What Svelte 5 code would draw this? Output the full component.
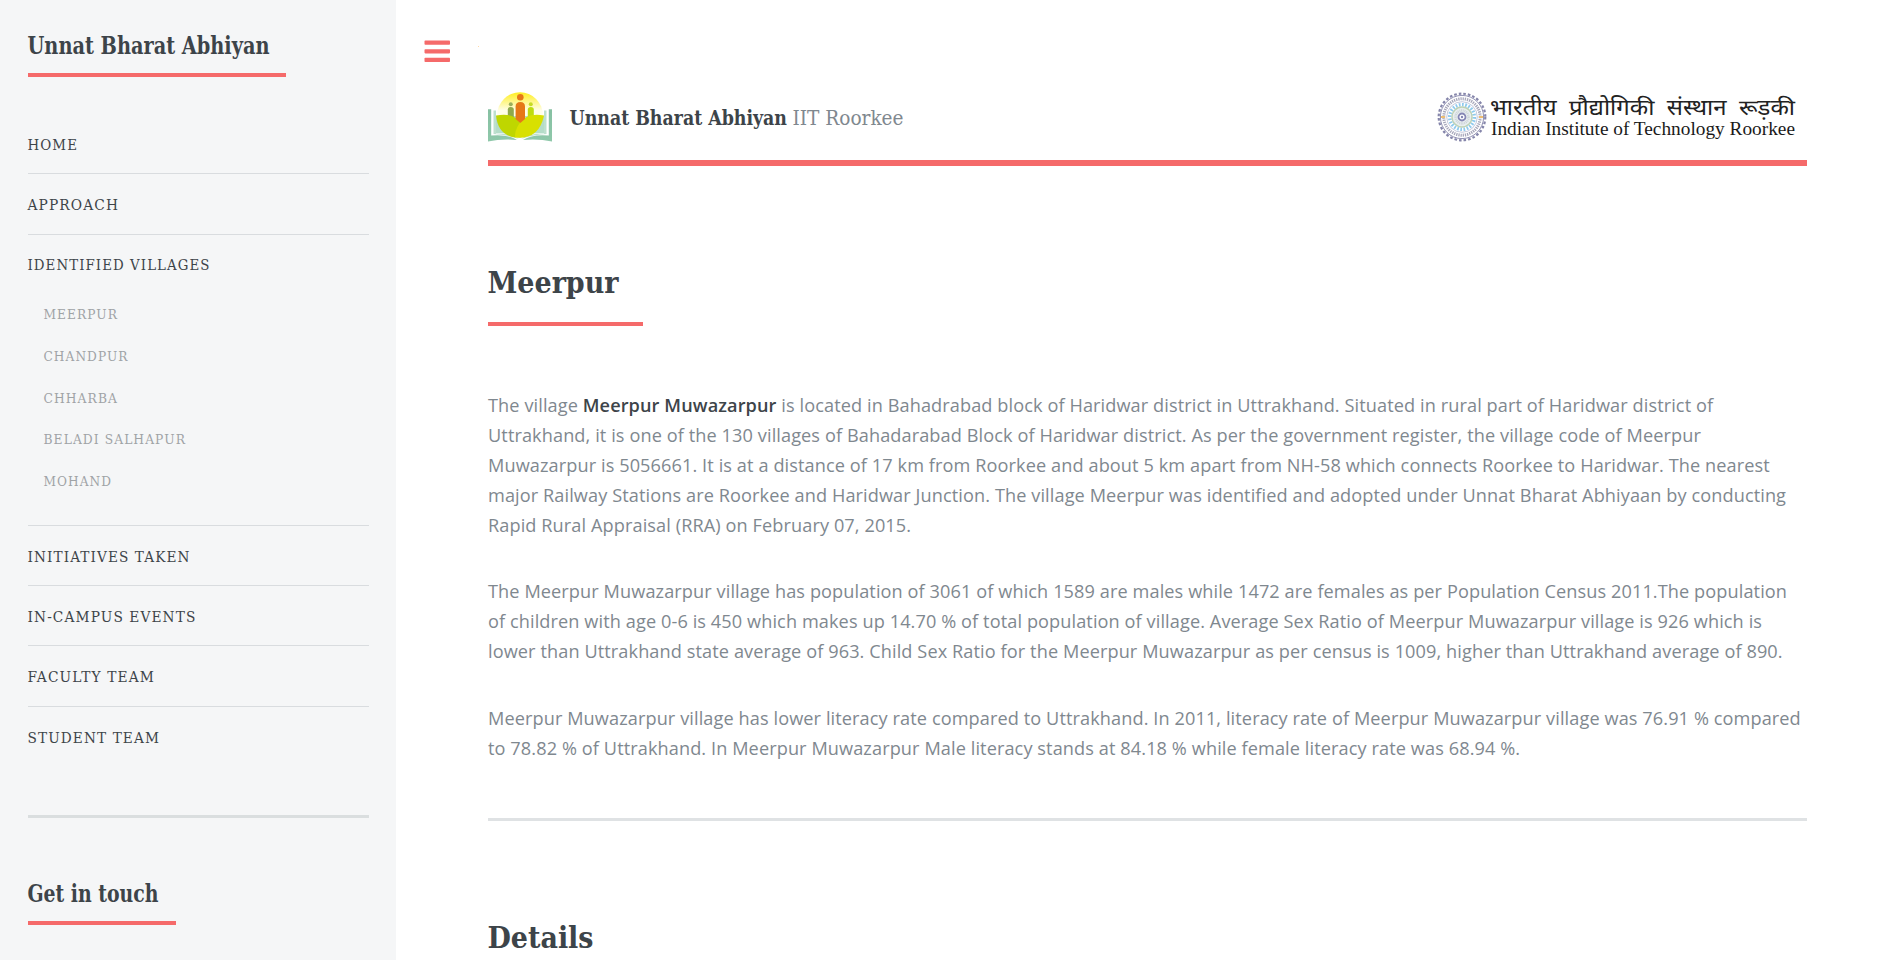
<script>
  const villages = [
    { label: 'Meerpur', w: 74.5, h: 42 },
    { label: 'Chandpur', w: 85, h: 42 },
    { label: 'Chharba', w: 74.5, h: 41 },
    { label: 'Beladi Salhapur', w: 142.5, h: 42 },
    { label: 'Mohand', w: 68.5, h: 42 }
  ];
  const menu = [
    { label: 'Home', w: 50.5, h: 59, base: 36, first: true },
    { label: 'Approach', w: 91.5, h: 61, base: 36 },
    { label: 'Identified Villages', w: 183, h: 291, base: 35, children: villages },
    { label: 'Initiatives Taken', w: 163, h: 60, base: 36 },
    { label: 'In-Campus Events', w: 169, h: 60, base: 36 },
    { label: 'Faculty Team', w: 127.5, h: 61, base: 36 },
    { label: 'Student Team', w: 132.5, h: 60, base: 36 }
  ];
</script>

{#snippet slab(text, w, h, base, size, cls)}
  <svg class="slab {cls}" width={w} height={h}>
    <text x="-0.5" y={base} font-size={size} textLength={w} lengthAdjust="spacingAndGlyphs">{text}</text>
  </svg>
{/snippet}

<div class="page">
  <aside>
    <h2 class="bar" style:width="258px">{@render slab('Unnat Bharat Abhiyan', 242, 45, 26, 23.5, 'bold')}</h2>
    <nav>
      {#each menu as item}
        <div class="item" class:first={item.first} style:height="{item.h}px">
          {@render slab(item.label.toUpperCase(), item.w, 60, item.base, 15.2, 'link')}
          {#if item.children}
            <div class="sub">
              {#each item.children as v}
                <div style:height="{v.h}px">{@render slab(v.label.toUpperCase(), v.w, 40, 24, 12.8, 'muted')}</div>
              {/each}
            </div>
          {/if}
        </div>
      {/each}
    </nav>
    <hr class="side-rule" />
    <h2 class="bar touch" style:width="148px">{@render slab('Get in touch', 131, 45, 26, 23.5, 'bold')}</h2>
  </aside>

  <div class="toggle">
    <svg width="26" height="22" fill="#f56a6a">
      <rect x="0.5" y="0.6" width="25.5" height="4.2" rx="0.8" /><rect x="0.5" y="9.2" width="25.5" height="4.2" rx="0.8" /><rect x="0.5" y="17.8" width="25.5" height="4.2" rx="0.8" />
    </svg>
    <span class="speck"></span>
  </div>

  <main>
    <header>
      <svg class="uba" width="64" height="50" viewBox="0 0 64 50">
        <defs>
          <linearGradient id="sun" x1="0" y1="0" x2="0" y2="1"><stop offset="0" stop-color="#ffee20" /><stop offset=".4" stop-color="#fffee8" /></linearGradient>
          <linearGradient id="page" x1="0" y1="0" x2="0" y2="1"><stop offset="0" stop-color="#86c0a2" /><stop offset="1" stop-color="#8fc8aa" /></linearGradient>
        </defs>
        <circle cx="32" cy="23" r="22.8" fill="url(#sun)" />
        <path d="M0 17.3H3.2V43.5Q20 42 29 48Q14 46.500 0 49.500Z M64 17.3H60.800V43.500Q44 42 35 48Q50 46.500 64 49.500Z" fill="url(#page)" />
        <path d="M5.500 18.500H8V41.500Q22 41 31 47Q18 42.500 5.500 42Z M58.500 18.500H56V41.500Q42 41 33 47Q46 42.500 58.500 42Z" fill="#bde0cd" />
        <path d="M8 24V41Q23 40.500 32 46Q41 40.500 56 41V24Z" fill="#b4dcc8" />
        <circle cx="22.800" cy="12.300" r="2" fill="#9baf5c" /><path d="M19.800 32V17.500Q19.800 15 22.800 15T25.800 17.500V32Z" fill="#8fa84d" />
        <circle cx="42.800" cy="12.300" r="2" fill="#c7db25" /><path d="M39.800 32V17.500Q39.800 15 42.800 15T45.800 17.500V32Z" fill="#bddc10" />
        <path d="M8 23.500Q25 20 32 30.500Q37 38 27 45.500Q10 43 8 23.500Z" fill="#bfd600" />
        <path d="M56 23.500Q39 20 31 32Q26.500 39 27 45.500Q51 48 56 23.500Z" fill="#d8e000" />
        <circle cx="32.300" cy="5.200" r="3.300" fill="#e67817" /><path d="M27.600 27V14.500Q27.600 10 32.300 10T37 14.500V27L32.300 31Z" fill="#e67817" />
      </svg>
      <div class="title">
        {@render slab('Unnat Bharat Abhiyan', 217.5, 50, 33, 20.8, 'bold')}
        {@render slab('IIT Roorkee', 111, 50, 33, 20.8, 'light')}
      </div>
      <div class="iit">
        <svg width="50" height="50" viewBox="-25 -25 50 50" fill="none">
          <circle r="23.300" stroke="#8585aa" stroke-width="2.200" stroke-dasharray="2.600 2" />
          <circle r="21.600" stroke="#8484aa" stroke-width=".9" />
          <circle r="18.200" stroke="#a6a6ba" stroke-width="3" stroke-dasharray="1.300 .9" />
          <circle r="15.300" stroke="#a0a5c4" stroke-width=".6" />
          <circle r="12.300" stroke="#8fcaee" stroke-width="3.600" stroke-dasharray="1.700 1.500" />
          <circle r="10" fill="#e9eef0" stroke="#bed2b5" stroke-width="1.400" />
          <circle r="6.500" stroke="#cdd5d9" stroke-width="2.500" stroke-dasharray="1 .7" />
          <circle r="3.500" fill="#fff" stroke="#8586b4" stroke-width="1.800" />
          <circle r="1.200" fill="#8586b4" />
          <path d="M-21 -1h4v2h-4ZM17 -1h4v2h-4Z" fill="#edbd72" />
        </svg>
        <svg width="305" height="50">
          <text class="hindi" x="-1" y="23" font-size="21.500" textLength="305" lengthAdjust="spacingAndGlyphs">भारतीय&nbsp; प्रौद्योगिकी&nbsp; संस्थान&nbsp; रूड़की</text>
          <text class="english" x="0" y="43" font-size="19.500" textLength="304" lengthAdjust="spacingAndGlyphs">Indian Institute of Technology Roorkee</text>
        </svg>
      </div>
    </header>
    <h1 class="bar" style:width="155px">{@render slab('Meerpur', 131, 66, 37, 30, 'bold')}</h1>
    <p>The village <b>Meerpur Muwazarpur</b> is located in Bahadrabad block of Haridwar district in Uttrakhand. Situated in rural part of Haridwar district of<br />Uttrakhand, it is one of the 130 villages of Bahadarabad Block of Haridwar district. As per the government register, the village code of Meerpur<br />Muwazarpur is 5056661. It is at a distance of 17 km from Roorkee and about 5 km apart from NH-58 which connects Roorkee to Haridwar. The nearest<br />major Railway Stations are Roorkee and Haridwar Junction. The village Meerpur was identified and adopted under Unnat Bharat Abhiyaan by conducting<br />Rapid Rural Appraisal (RRA) on February 07, 2015.</p>
    <p>The Meerpur Muwazarpur village has population of 3061 of which 1589 are males while 1472 are females as per Population Census 2011.The population<br />of children with age 0-6 is 450 which makes up 14.70 % of total population of village. Average Sex Ratio of Meerpur Muwazarpur village is 926 which is<br />lower than Uttrakhand state average of 963. Child Sex Ratio for the Meerpur Muwazarpur as per census is 1009, higher than Uttrakhand average of 890.</p>
    <p class="last">Meerpur Muwazarpur village has lower literacy rate compared to Uttrakhand. In 2011, literacy rate of Meerpur Muwazarpur village was 76.91 % compared<br />to 78.82 % of Uttrakhand. In Meerpur Muwazarpur Male literacy stands at 84.18 % while female literacy rate was 68.94 %.</p>
    <hr class="rule" />
    <h1>{@render slab('Details', 106, 60, 36.5, 30, 'bold')}</h1>
  </main>
</div>

<style>
  :global(body) { margin: 0; background: #fff; overflow: hidden; }
  .page { display: flex; height: 960px; overflow: hidden; font-family: 'Open Sans', sans-serif; color: #7f888f; }
  svg { display: block; flex: none; overflow: visible; }
  h1, h2 { margin: 0; }
  aside { box-sizing: border-box; width: 396px; flex: none; padding: 28px 27px 0 28px; background: #f5f6f7; }
  .bar { border-bottom: 4px solid #f56a6a; }
  .slab text { font-family: 'Roboto Slab', 'DejaVu Serif Condensed', 'DejaVu Serif', serif; font-stretch: condensed; }
  .bold text { font-weight: 700; fill: #3d4449; }
  .link text { fill: #3d4449; font-weight: 400; letter-spacing: 1.1px; }
  .muted text { fill: #9fa3a6; font-weight: 400; letter-spacing: 1px; }
  .light text { fill: #7f888f; font-weight: 400; }
  nav { padding-top: 37px; }
  .item { box-sizing: border-box; border-top: 1px solid #d9dcdf; }
  .item.first { border-top: 0; }
  .sub { padding-left: 16px; }
  .side-rule { margin: 49px 0 0; border: 0; height: 3px; background: #dadedf; }
  .touch { margin-top: 58px; }
  .toggle { display: flex; flex: none; width: 92px; box-sizing: border-box; padding: 40px 0 0 28px; }
  .speck { width: 1px; height: 1px; margin: 6px 0 0 28px; background: #ffd9a8; }
  main { flex: none; width: 1319px; padding-top: 92px; }
  header { display: flex; height: 68px; border-bottom: 6px solid #f56a6a; }
  .title { display: flex; gap: 5.5px; margin-left: 18px; }
  .iit { display: flex; gap: 4px; margin-left: auto; padding-right: 11px; }
  .hindi { font-family: 'Noto Sans Devanagari', 'Noto Sans', sans-serif; font-weight: 400; fill: #222; }
  .english { font-family: 'Liberation Serif', serif; fill: #1a1a1a; }
  header + h1 { margin-top: 90px; }
  p { margin: 0 0 36px; font-size: 18.15px; letter-spacing: 0.094px; line-height: 30px; white-space: nowrap; }
  h1 + p { margin-top: 64px; }
  .last { margin-top: 37px; }
  b { font-weight: 600; color: #3d4449; }
  .rule { margin: 55px 0 90px; border: 0; height: 3px; background: #dfe2e4; }
</style>
